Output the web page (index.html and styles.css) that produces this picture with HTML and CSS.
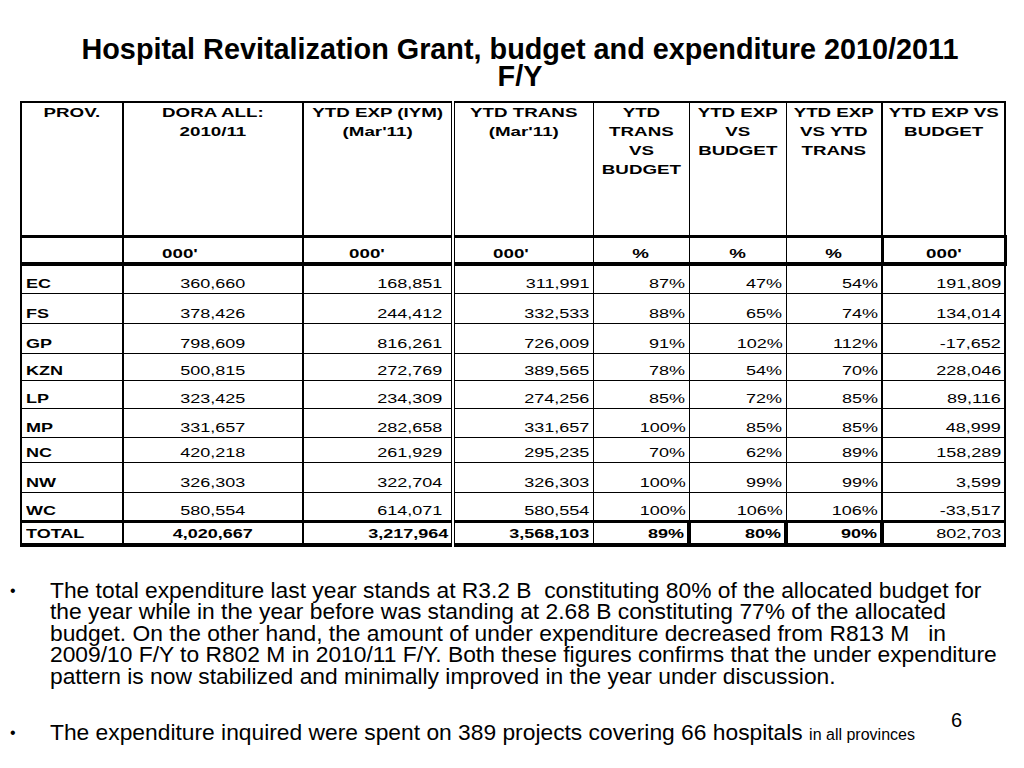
FILE: index.html
```html
<!DOCTYPE html>
<html lang="en">
<head>
<meta charset="utf-8">
<title>Hospital Revitalization Grant</title>
<link rel="stylesheet" href="styles.css">
</head>
<body>
<div class="slide">
  <h1 class="title"><span class="line">Hospital Revitalization Grant, budget and expenditure 2010/2011</span><span class="line">F/Y</span></h1>

  <table class="sheet">
    <colgroup>
      <col class="w1"><col class="w2"><col class="w3"><col class="w4"><col class="w5"><col class="w6"><col class="w7"><col class="w8">
    </colgroup>
    <thead>
      <tr class="head">
        <th class="c b2"><span class="t">PROV.</span></th>
        <th class="c b2"><span class="t">DORA ALL:<br>2010/11</span></th>
        <th class="c dbl"><span class="t">YTD EXP (IYM)<br>(Mar'11)</span></th>
        <th class="c"><span class="t">YTD TRANS<br>(Mar'11)</span></th>
        <th class="c"><span class="t">YTD<br>TRANS<br>VS<br>BUDGET</span></th>
        <th class="c"><span class="t">YTD EXP<br>VS<br>BUDGET</span></th>
        <th class="c b2"><span class="t">YTD EXP<br>VS YTD<br>TRANS</span></th>
        <th class="c"><span class="t">YTD EXP VS<br>BUDGET</span></th>
      </tr>
      <tr class="units">
        <th class="b2"></th>
        <th class="c b2 u-dora"><span class="t">000'</span></th>
        <th class="c dbl u-exp"><span class="t">000'</span></th>
        <th class="c u-trans"><span class="t">000'</span></th>
        <th class="c"><span class="t">%</span></th>
        <th class="c"><span class="t">%</span></th>
        <th class="c b3"><span class="t">%</span></th>
        <th class="c last"><span class="t">000'</span></th>
      </tr>
    </thead>
    <tbody>
      <tr class="h29"><td class="l b2 prov"><span class="t">EC</span></td><td class="c b2"><span class="t">360,660</span></td><td class="r dbl p8"><span class="t">168,851</span></td><td class="r"><span class="t">311,991</span></td><td class="r"><span class="t">87%</span></td><td class="r"><span class="t">47%</span></td><td class="r b2"><span class="t">54%</span></td><td class="r"><span class="t">191,809</span></td></tr>
      <tr class="h30"><td class="l b2 prov"><span class="t">FS</span></td><td class="c b2"><span class="t">378,426</span></td><td class="r dbl p8"><span class="t">244,412</span></td><td class="r"><span class="t">332,533</span></td><td class="r"><span class="t">88%</span></td><td class="r"><span class="t">65%</span></td><td class="r b2"><span class="t">74%</span></td><td class="r"><span class="t">134,014</span></td></tr>
      <tr class="h30"><td class="l b2 prov"><span class="t">GP</span></td><td class="c b2"><span class="t">798,609</span></td><td class="r dbl p8"><span class="t">816,261</span></td><td class="r"><span class="t">726,009</span></td><td class="r"><span class="t">91%</span></td><td class="r"><span class="t">102%</span></td><td class="r b2"><span class="t">112%</span></td><td class="r"><span class="t">-17,652</span></td></tr>
      <tr class="h27"><td class="l b2 prov"><span class="t">KZN</span></td><td class="c b2"><span class="t">500,815</span></td><td class="r dbl p8"><span class="t">272,769</span></td><td class="r"><span class="t">389,565</span></td><td class="r"><span class="t">78%</span></td><td class="r"><span class="t">54%</span></td><td class="r b2"><span class="t">70%</span></td><td class="r"><span class="t">228,046</span></td></tr>
      <tr class="h28"><td class="l b2 prov"><span class="t">LP</span></td><td class="c b2"><span class="t">323,425</span></td><td class="r dbl p8"><span class="t">234,309</span></td><td class="r"><span class="t">274,256</span></td><td class="r"><span class="t">85%</span></td><td class="r"><span class="t">72%</span></td><td class="r b2"><span class="t">85%</span></td><td class="r"><span class="t">89,116</span></td></tr>
      <tr class="h29"><td class="l b2 prov"><span class="t">MP</span></td><td class="c b2"><span class="t">331,657</span></td><td class="r dbl p8"><span class="t">282,658</span></td><td class="r"><span class="t">331,657</span></td><td class="r"><span class="t">100%</span></td><td class="r"><span class="t">85%</span></td><td class="r b2"><span class="t">85%</span></td><td class="r"><span class="t">48,999</span></td></tr>
      <tr class="h25"><td class="l b2 prov"><span class="t">NC</span></td><td class="c b2"><span class="t">420,218</span></td><td class="r dbl p8"><span class="t">261,929</span></td><td class="r"><span class="t">295,235</span></td><td class="r"><span class="t">70%</span></td><td class="r"><span class="t">62%</span></td><td class="r b2"><span class="t">89%</span></td><td class="r"><span class="t">158,289</span></td></tr>
      <tr class="h30"><td class="l b2 prov"><span class="t">NW</span></td><td class="c b2"><span class="t">326,303</span></td><td class="r dbl p8"><span class="t">322,704</span></td><td class="r"><span class="t">326,303</span></td><td class="r"><span class="t">100%</span></td><td class="r"><span class="t">99%</span></td><td class="r b2"><span class="t">99%</span></td><td class="r"><span class="t">3,599</span></td></tr>
      <tr class="h29"><td class="l b2 prov"><span class="t">WC</span></td><td class="c b2"><span class="t">580,554</span></td><td class="r dbl p8"><span class="t">614,071</span></td><td class="r"><span class="t">580,554</span></td><td class="r"><span class="t">100%</span></td><td class="r"><span class="t">106%</span></td><td class="r b2"><span class="t">106%</span></td><td class="r"><span class="t">-33,517</span></td></tr>
      <tr class="total"><td class="l b2 prov"><span class="t">TOTAL</span></td><td class="c b2 bold"><span class="t">4,020,667</span></td><td class="r dbl bold"><span class="t">3,217,964</span></td><td class="r bold"><span class="t">3,568,103</span></td><td class="r bold b4"><span class="t">89%</span></td><td class="r bold b4"><span class="t">80%</span></td><td class="r bold b4"><span class="t">90%</span></td><td class="r"><span class="t">802,703</span></td></tr>
    </tbody>
  </table>

  <div class="notes">
    <div class="item">
      <span class="dot">•</span>
      <p class="text">The total expenditure last year stands at R3.2 B&nbsp; constituting 80% of the allocated budget for<br>the year while in the year before was standing at 2.68 B constituting 77% of the allocated<br>budget. On the other hand, the amount of under expenditure decreased from R813 M &nbsp; in<br>2009/10 F/Y to R802 M in 2010/11 F/Y. Both these figures confirms that the under expenditure<br>pattern is now stabilized and minimally improved in the year under discussion.</p>
    </div>
    <div class="item second">
      <span class="dot">•</span>
      <p class="text">The expenditure inquired were spent on 389 projects covering 66 hospitals <small class="small">in all provinces</small></p>
    </div>
  </div>

  <div class="page-no">6</div>
</div>
</body>
</html>
```

FILE: styles.css
```css
* { box-sizing: border-box; }

html, body {
  margin: 0;
  padding: 0;
  background: #ffffff;
}

body {
  color: #000;
  font-family: "Liberation Sans", Arial, Helvetica, sans-serif;
}

.slide {
  position: relative;
  width: 1024px;
  height: 768px;
  overflow: hidden;
}

/* Title */
.title {
  margin: 0;
  padding: 35px 0 0 16px;
  text-align: center;
  font-size: 30px;
  line-height: 27px;
  font-weight: bold;
  letter-spacing: 0;
}
.title .line {
  display: block;
  transform: scaleX(0.96);
  transform-origin: center center;
}

/* Table */
.sheet {
  margin: 12px 0 0 20px;
  width: 984px;
  table-layout: fixed;
  border-collapse: collapse;
  border: 2px solid #000;
  border-bottom-width: 4px;
}
.w1 { width: 102px; }
.w2 { width: 180px; }
.w3 { width: 150px; }
.w4 { width: 140px; }
.w5 { width: 96px; }
.w6 { width: 97px; }
.w7 { width: 96px; }
.w8 { width: 123px; }

.sheet th,
.sheet td {
  border: 1px solid #000;
  padding: 0 3px;
  white-space: nowrap;
  overflow: visible;
}

.sheet .t {
  display: inline-block;
  transform: scaleX(1.5);
  white-space: nowrap;
}
.sheet .l { text-align: left; }
.sheet .l .t { transform-origin: left center; }
.sheet .r { text-align: right; }
.sheet .r .t { transform-origin: right center; }
.sheet .c { text-align: center; }
.sheet .c .t { transform-origin: center center; }

.sheet .b2 { border-right-width: 2px; }
.sheet .b3 { border-right-width: 3px; }
.sheet .b4 { border-right-width: 4px; }
.sheet .dbl { border-right: 4px double #000; }

/* header row */
.head th {
  height: 134px;
  vertical-align: top;
  padding-top: 1px;
  font-size: 12.5px;
  line-height: 19px;
  font-weight: bold;
  border-bottom-width: 3px;
}

/* units row */
.units th {
  height: 28px;
  vertical-align: middle;
  padding-top: 8px;
  font-size: 12.5px;
  line-height: 16px;
  font-weight: bold;
  border-bottom-width: 4px;
}
.units .u-dora { padding-right: 70px; }
.units .u-exp { padding-right: 24px; }
.units .u-trans { padding-right: 28px; }
.units .last {
  border-left-width: 3px;
  border-right-width: 3px;
}

/* body rows */
.sheet td {
  vertical-align: bottom;
  font-size: 12px;
  line-height: 14px;
  padding-bottom: 2px;
}
.sheet td.p8 { padding-right: 9px; }
.sheet td.prov { font-weight: bold; padding-left: 4px; }
.sheet td.bold { font-weight: bold; }

.h25 td { height: 25px; }
.h27 td { height: 27px; }
.h28 td { height: 28px; }
.h29 td { height: 29px; }
.h30 td { height: 30px; }

.total td {
  height: 24px;
  border-top-width: 3px;
  padding-bottom: 2px;
}

/* Notes */
.notes {
  margin-top: 33px;
  font-size: 22.8px;
  line-height: 21.4px;
}
.item {
  display: flex;
  align-items: flex-start;
}
.item.second { margin-top: 35px; }
.dot {
  width: 50px;
  padding-left: 10px;
  font-size: 16px;
}
.text {
  margin: 0;
  white-space: nowrap;
}
.small { font-size: 16px; }

.page-no {
  position: absolute;
  left: 951px;
  top: 708px;
  font-size: 20px;
  line-height: 24px;
}
```
